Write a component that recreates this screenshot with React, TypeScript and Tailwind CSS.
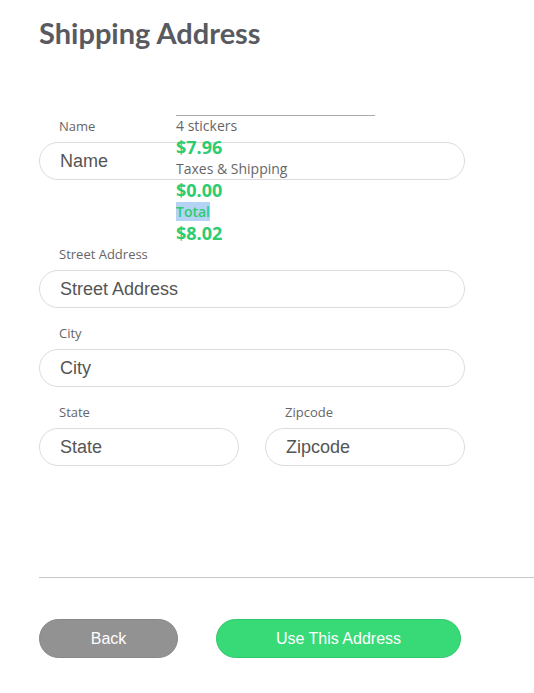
export default function App() {
  const field =
    "w-full h-[38px] rounded-full border border-[#dcdcdc] bg-white px-5 text-[18px] text-[#555] placeholder:text-[#555] outline-none font-['Liberation_Sans',Arial,sans-serif]"
  const label =
    "block pl-5 h-[18px] leading-[18px] mb-[7px] text-[13px] text-[#666] font-['Open_Sans',sans-serif]"

  return (
    <div className="min-h-screen w-[534px] bg-white">
      <h1 className="pl-[39px] pt-[15px] text-[29px] leading-[35px] font-bold text-[#595a5f] font-['Lato',sans-serif]">
        Shipping Address
      </h1>

      <form className="relative w-[426px] ml-[39px] mt-[67px]">
        {/* order summary overlapping the form */}
        <div className="absolute left-[137px] top-[-2px] w-[199px] border-t border-[#aaa] font-['Open_Sans',sans-serif]">
          <p className="text-[14px] leading-[20px] text-[#666]">4 stickers</p>
          <p className="text-[18px] leading-[22px] font-bold text-[#2ecc71]">$7.96</p>
          <p className="text-[14px] leading-[21px] text-[#666]">Taxes &amp; Shipping</p>
          <p className="text-[18px] leading-[22px] font-bold text-[#2ecc71]">$0.00</p>
          <p className="text-[14px] leading-[21px] font-semibold text-[#2ecc71]">
            <span className="bg-[#b4d3f5]">Total</span>
          </p>
          <p className="text-[18px] leading-[22px] font-bold text-[#2ecc71]">$8.02</p>
        </div>

        <label className={label}>Name</label>
        <input className={field} placeholder="Name" />

        <label className={label + " mt-[65px]"}>Street Address</label>
        <input className={field} placeholder="Street Address" />

        <label className={label + " mt-4"}>City</label>
        <input className={field} placeholder="City" />

        <div className="flex gap-[26px] mt-4">
          <div className="w-[200px]">
            <label className={label}>State</label>
            <input className={field} placeholder="State" />
          </div>
          <div className="w-[200px]">
            <label className={label}>Zipcode</label>
            <input className={field} placeholder="Zipcode" />
          </div>
        </div>
      </form>

      <div className="ml-[39px] mt-[111px] border-t border-[#c8c8c8]" />

      <div className="flex gap-[38px] ml-[39px] mt-[41px] font-['Liberation_Sans',Arial,sans-serif]">
        <button className="w-[139px] h-[39px] rounded-full bg-[#929292] border border-[#888] text-white text-[16px]">
          Back
        </button>
        <button className="w-[245px] h-[39px] rounded-full bg-[#38da78] border border-[#30c86c] text-white text-[16px]">
          Use This Address
        </button>
      </div>
    </div>
  )
}
